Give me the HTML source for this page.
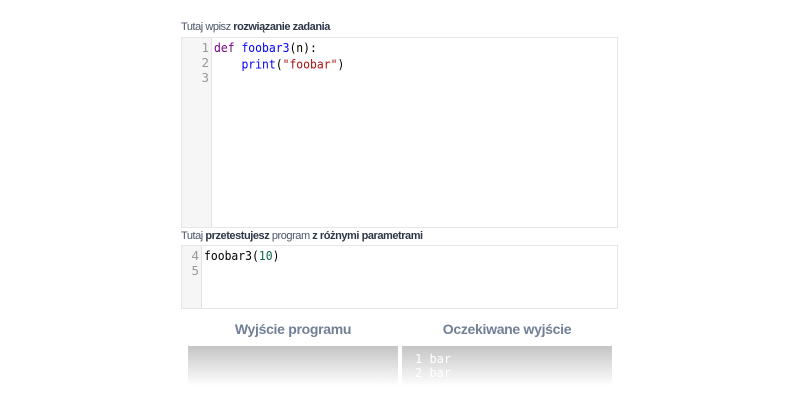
<!DOCTYPE html>
<html><head><meta charset="utf-8"><style>
body{margin:0;width:800px;height:400px;background:#fff;font-family:"Liberation Sans",sans-serif;position:relative;overflow:hidden}
.lbl{position:absolute;left:181px;font-size:11px;color:#4a5568;letter-spacing:-0.45px}
.lbl b{color:#2d3748}
.ed{position:absolute;left:181px;width:437px;border:1px solid #e6e6e6;background:#fff;box-sizing:border-box}
.gut{position:absolute;left:0;top:0;bottom:0;background:#f6f6f6;border-right:1px solid #e2e2e2;color:#999;text-align:right;font-family:"DejaVu Sans Mono",monospace;font-size:12.5px;line-height:15px;padding-top:2px;box-sizing:border-box}
.code{position:absolute;top:2px;font-family:"DejaVu Sans Mono",monospace;font-size:11.4px;line-height:15px;color:#000;white-space:pre;transform:scaleY(1.1);transform-origin:top left}
.k{color:#708}.f{color:#00f}.s{color:#a11}.n{color:#164}
h3{position:absolute;top:321px;margin:0;font-size:14px;color:#718096;font-weight:bold;text-align:center;width:210px;letter-spacing:-0.3px}
.out{position:absolute;top:346px;height:40px;width:210px;background:linear-gradient(#c4c4c4,#fff);font-family:"DejaVu Sans Mono",monospace;font-size:12px;line-height:14px;color:#fff;padding:6px 0 0 13px;box-sizing:border-box}
</style></head><body>
<div class="lbl" style="top:21px">Tutaj wpisz <b>rozwiązanie zadania</b></div>
<div class="ed" style="top:37px;height:191px">
<div class="gut" style="width:30px;padding-right:2px">1<br>2<br>3</div>
<div class="code" style="left:32px"><span class="k">def</span> <span class="f">foobar3</span>(n):
    <span class="f">print</span>(<span class="s">"foobar"</span>)</div>
</div>
<div class="lbl" style="top:230px">Tutaj <b>przetestujesz</b> program <b>z różnymi parametrami</b></div>
<div class="ed" style="top:245px;height:64px">
<div class="gut" style="width:20px;padding-right:2px">4<br>5</div>
<div class="code" style="left:22px">foobar3(<span class="n">10</span>)</div>
</div>
<h3 style="left:188px">Wyjście programu</h3>
<h3 style="left:402px">Oczekiwane wyjście</h3>
<div class="out" style="left:188px"></div>
<div class="out" style="left:402px">1 bar<br>2 bar</div>
</body></html>
